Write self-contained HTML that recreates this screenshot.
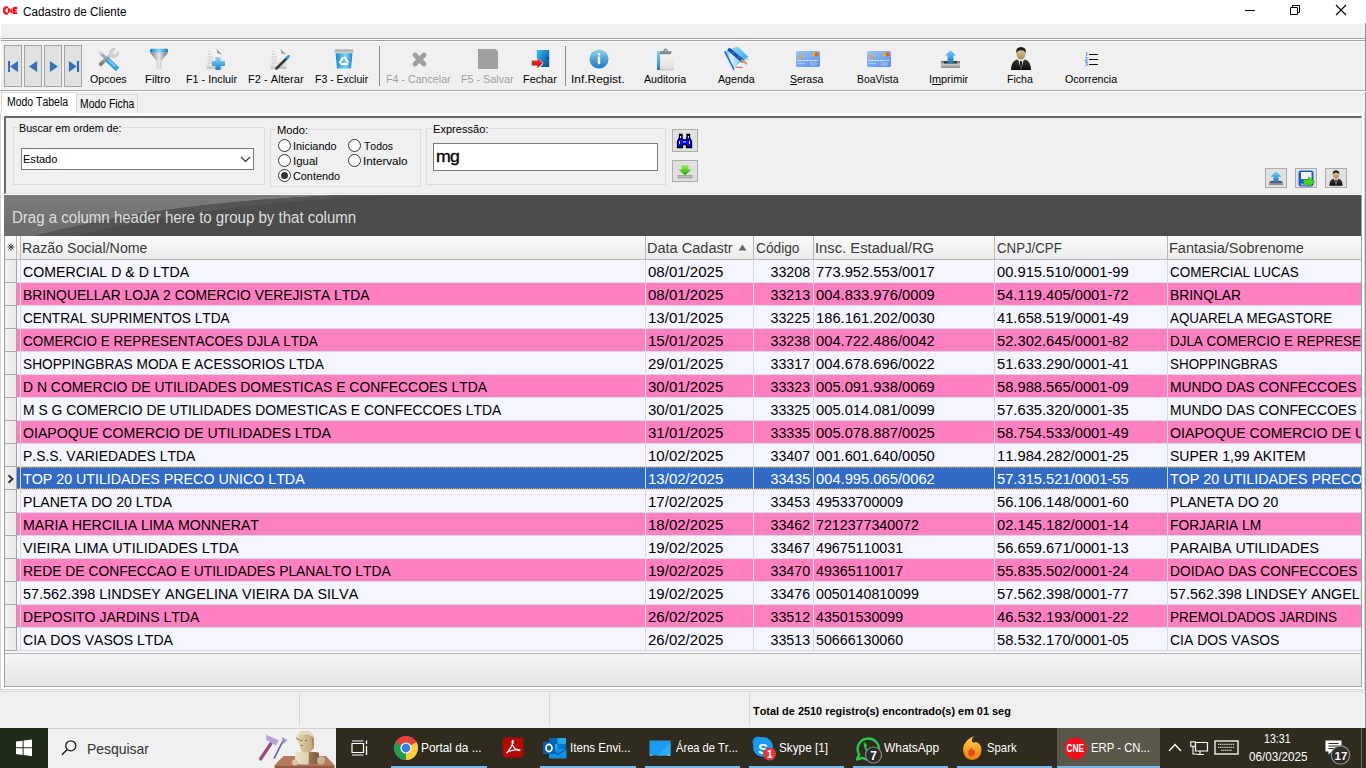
<!DOCTYPE html>
<html><head><meta charset="utf-8"><title>Cadastro de Cliente</title>
<style>
*{box-sizing:border-box;margin:0;padding:0}
html,body{width:1366px;height:768px;overflow:hidden;background:#f0f0f0;font-family:"Liberation Sans",sans-serif;position:relative}
.a{position:absolute}
#title{left:0;top:0;width:1366px;height:24px;background:#fff}
#title .t{left:23px;top:4px;font-size:11.6px;color:#000;white-space:nowrap}
#menu{left:1px;top:24px;width:1363px;height:14px;background:#f0f0f0}
.hl{position:absolute;height:1px;background:#a0a0a0}
.wl{position:absolute;height:1px;background:#fff}
#winr{left:1365px;top:23px;width:1px;height:705px;background:#8f8f8f}
.nav{position:absolute;top:45px;width:18px;height:42px;background:#e1e1e1;border:1px solid #a6a6a6}
.nav svg{position:absolute;left:1px;top:14px}
.tb{position:absolute;top:42px;height:48px}
.tb .lbl{position:absolute;top:73px;font-size:10.5px;color:#000;white-space:nowrap}
.lbl{position:absolute;font-size:10.5px;color:#000;white-space:nowrap;line-height:12px}
.lbl.dis{color:#a0a0a0}
.sep{position:absolute;top:46px;width:1px;height:40px;background:#8a8a8a}
.ico{position:absolute}
.tab{position:absolute;font-size:11.6px;white-space:nowrap}
.gb{position:absolute;border:1px solid #dcdcdc}
.gbl{position:absolute;font-size:10.6px;background:#f0f0f0;padding:0 1px;white-space:nowrap;line-height:12px}
.radio{position:absolute;width:13px;height:13px;border-radius:50%;border:1px solid #333;background:#fff}
.radio.on:after{content:"";position:absolute;left:2px;top:2px;width:7px;height:7px;border-radius:50%;background:#333}
.rl{background:#f5f5ff}
.rp{background:#ff80c0}
.rs{background:#316ac5;color:#fff}
.row{position:absolute;left:5px;width:1356px;height:23px;border-bottom:1px solid #d5d9e4}
.row .c{position:absolute;top:0;height:22px;line-height:24px;font-size:15.5px;white-space:nowrap;overflow:hidden;padding-left:2px;color:#000;border-left:1px solid #d5d9e4}
.row .c.r{text-align:right;padding-right:3px;padding-left:0}
.rs .c{color:#fff}
.row .c{left:0}
.ind{position:absolute;left:0;top:0;width:12px;height:23px;background:linear-gradient(90deg,#f2f2f2,#e8e8e8);border-right:1px solid #a4a4a4;border-bottom:1px solid #a8a8a8}
.ind2{position:absolute;left:12px;top:0;width:3px;height:22px}
.hdr{position:absolute;top:236px;height:24px;background:linear-gradient(#fafafa,#ececec);border-bottom:1px solid #b8b8b8;font-size:15px;color:#3a3a3a;line-height:23px;white-space:nowrap;overflow:hidden;padding-left:3px}
.sb{position:absolute;top:693px;height:33px;width:1px;background:#d7d7d7}
.tk{position:absolute;color:#fff;font-size:12.2px;white-space:nowrap;line-height:14px}
.ul{position:absolute;top:766px;height:2px;background:#76b9ed}
.sx{display:inline-block;white-space:pre}
body{font-kerning:none}
.lb{position:absolute;white-space:pre;transform-origin:0 0}
.dot{position:absolute;left:12px;width:1344px;height:1px;background:repeating-linear-gradient(90deg,#f0a030 0 1px,transparent 1px 2px)}

</style></head><body>
<!-- TITLE BAR -->
<div id="title" class="a">
  <svg class="a" style="left:2px;top:5px" width="17" height="11" viewBox="0 0 17 11">
 <path d="M5 2.4Q2.2 2.2 2.1 5.5Q2.2 8.8 5 8.6" fill="none" stroke="#ff0a14" stroke-width="2.4" stroke-linecap="round"/>
 <path d="M6 8.2V3.2H7.6L9.2 5.6V3.2H10.6V8.2H9.2L7.5 5.7V8.2z" fill="#ff0a14"/>
 <path d="M11 2H15.2V3.9H13V4.7H14.8V6.4H13V7.2H15.3V9H11z" fill="#ff0a14"/>
</svg>
  <svg class="a" style="left:1240px;top:0" width="126" height="24" viewBox="0 0 126 24">
    <path d="M5 10.5H15" stroke="#000" stroke-width="1"/>
    <path d="M50.5 7.5h7v7h-7z M52.5 7.5V5.5h7v7h-2" fill="none" stroke="#000" stroke-width="1"/>
    <path d="M96 5L106 15M106 5L96 15" stroke="#000" stroke-width="1.1"/>
  </svg>
</div>
<div id="menu" class="a"></div>
<div class="hl" style="left:0;top:38px;width:1366px"></div>
<div class="wl" style="left:0;top:39px;width:1366px"></div>
<div class="hl" style="left:1px;top:40px;width:1364px"></div>
<div class="wl" style="left:1px;top:41px;width:1364px"></div>
<div id="winr" class="a"></div>
<div class="a" style="left:0;top:24px;width:1px;height:666px;background:#fff"></div>

<!-- TOOLBAR -->
<div class="nav" style="left:4px"><svg width="17" height="14" viewBox="0 0 17 14"><path d="M2 1h2v11H2z M12 1v11L4 6.5z" fill="#3671b8"/></svg></div>
<div class="nav" style="left:24px"><svg width="17" height="14" viewBox="0 0 17 14"><path d="M11.1 1v11L3.1 6.5z" fill="#3671b8"/></svg></div>
<div class="nav" style="left:44px"><svg width="17" height="14" viewBox="0 0 17 14"><path d="M3.9 1v11l8-5.5z" fill="#3671b8"/></svg></div>
<div class="nav" style="left:64px"><svg width="17" height="14" viewBox="0 0 17 14"><path d="M2.9 1v11l7.8-5.5z M10.9 1h2.2v11h-2.2z" fill="#3671b8"/></svg></div>

<svg class="ico" style="left:96px;top:46px" width="26" height="26" viewBox="0 0 26 26">
 <defs>
  <linearGradient id="wr" x1="0" y1="1" x2="1" y2="0"><stop offset="0" stop-color="#7a7a7a"/><stop offset=".6" stop-color="#b8b8b8"/><stop offset="1" stop-color="#dedede"/></linearGradient>
  <linearGradient id="bh" x1="0" y1="0" x2="1" y2="0"><stop offset="0" stop-color="#2a8fd0"/><stop offset=".5" stop-color="#7fd3f7"/><stop offset="1" stop-color="#1e7fc2"/></linearGradient>
 </defs>
 <path d="M4.8 18.2L16 7.5" stroke="url(#wr)" stroke-width="3.8" stroke-linecap="round"/>
 <circle cx="18" cy="7" r="5" fill="#cfcfcf"/>
 <path d="M17.5 7.5L23 2" stroke="#f0f0f0" stroke-width="3.2"/>
 <path d="M4.5 7.2L11.5 13.8" stroke="#a6a6a6" stroke-width="3"/>
 <circle cx="4.4" cy="6.8" r="2.1" fill="#d9d9d9"/>
 <path d="M12.2 14.6L19.8 21.6" stroke="#39a3dd" stroke-width="5" stroke-linecap="square"/>
 <path d="M12 13.6L19.6 20.6" stroke="#8edbf9" stroke-width="1.4"/>
</svg>
<svg class="ico" style="left:148px;top:47px" width="22" height="24" viewBox="0 0 22 24">
 <defs>
  <linearGradient id="fg" x1="0" y1="0" x2="1" y2="0"><stop offset="0" stop-color="#707070"/><stop offset=".5" stop-color="#e8e8e8"/><stop offset="1" stop-color="#6a6a6a"/></linearGradient>
  <linearGradient id="fr" x1="0" y1="0" x2="1" y2="0"><stop offset="0" stop-color="#1d78c8"/><stop offset=".5" stop-color="#8fd8f8"/><stop offset="1" stop-color="#1d78c8"/></linearGradient>
 </defs>
 <path d="M2 5.5H20L13.3 14V22H8.7V14z" fill="url(#fg)"/>
 <rect x="2" y="1.8" width="18" height="3.6" rx="1.2" fill="url(#fr)"/>
</svg>
<svg class="ico" style="left:204px;top:47px" width="24" height="24" viewBox="0 0 24 24">
 <defs><linearGradient id="dg" x1="0" y1="0" x2="0" y2="1"><stop offset="0" stop-color="#fafafa"/><stop offset=".8" stop-color="#e6e6e6"/><stop offset="1" stop-color="#b8b8b8"/></linearGradient>
 <linearGradient id="pg" x1="0" y1="0" x2="0" y2="1"><stop offset="0" stop-color="#8fdcf8"/><stop offset="1" stop-color="#1c7cc6"/></linearGradient></defs>
 <path d="M2.5 1.5H13L18.5 7V22H2.5z" fill="url(#dg)" stroke="#e2e2e2" stroke-width=".6"/>
 <path d="M12.5 2L18 7.5L13.5 6.5z" fill="#9a9a9a"/>
 <path d="M4 4h3M4 7h3.5M4 10h5M4 13h4M4 16h4" stroke="#c8c8c8" stroke-width="1"/>
 <path d="M11.5 10H16.5V14H21V19H16.5V23H11.5V19H8V14H11.5z" fill="url(#pg)"/>
</svg>
<svg class="ico" style="left:268px;top:47px" width="24" height="24" viewBox="0 0 24 24">
 <path d="M2.5 1.5H13L18.5 7V22H2.5z" fill="url(#dg)" stroke="#e2e2e2" stroke-width=".6"/>
 <path d="M12.5 2L18 7.5L13.5 6.5z" fill="#9a9a9a"/>
 <path d="M4 4h3M4 7h3.5M4 10h5M4 13h4M4 16h4" stroke="#c8c8c8" stroke-width="1"/>
 <path d="M8.5 21.5L20 10" stroke="#3b3b3b" stroke-width="2.6" stroke-linecap="round"/>
 <path d="M19 11l1.8-1.8" stroke="#3aa0de" stroke-width="2.6" stroke-linecap="round"/>
</svg>
<svg class="ico" style="left:332px;top:47px" width="24" height="24" viewBox="0 0 24 24">
 <defs><linearGradient id="bn" x1="0" y1="0" x2="1" y2="0"><stop offset="0" stop-color="#1a86cc"/><stop offset=".6" stop-color="#7fd4f7"/><stop offset="1" stop-color="#1a7ec4"/></linearGradient>
 <linearGradient id="ld" x1="0" y1="0" x2="0" y2="1"><stop offset="0" stop-color="#9c9c9c"/><stop offset="1" stop-color="#dadada"/></linearGradient></defs>
 <path d="M3.5 5.8H20.5L19 21.5H5z" fill="url(#bn)"/>
 <path d="M2.5 3.6Q3 2.6 4.5 2.6H19.5Q21 2.6 21.5 3.6V6.2H2.5z" fill="url(#ld)"/>
 <path d="M12 8.6L16.9 17H7.1z" fill="none" stroke="#fff" stroke-width="2" stroke-linejoin="round" stroke-dasharray="7 2.6" stroke-dashoffset="-1.2"/>
</svg>
<svg class="ico" style="left:411px;top:51px" width="17" height="17" viewBox="0 0 17 17">
 <path d="M4 4L13 13M13 4L4 13" stroke="#a0a0a0" stroke-width="4.8" stroke-linecap="round"/>
</svg>
<svg class="ico" style="left:478px;top:49px" width="20" height="20" viewBox="0 0 20 20">
 <path d="M0 0H17.5L20 2.5V20H0z" fill="#a0a0a0"/>
</svg>
<svg class="ico" style="left:530px;top:48px" width="22" height="22" viewBox="0 0 22 22">
 <defs><linearGradient id="dr" x1="0" y1="0" x2="1" y2="1"><stop offset="0" stop-color="#3ec0f4"/><stop offset=".5" stop-color="#1a7fc4"/><stop offset="1" stop-color="#0d4f8a"/></linearGradient>
 <linearGradient id="ra" x1="0" y1="0" x2="0" y2="1"><stop offset="0" stop-color="#f24040"/><stop offset="1" stop-color="#b80c0c"/></linearGradient></defs>
 <path d="M6.8 2H19.2V19H10.5L13.5 15L8.5 10.5H6.8z" fill="url(#dr)"/>
 <circle cx="17.6" cy="10" r=".7" fill="#111"/>
 <path d="M1.8 12.6H7.6V9.8L12.8 15L7.6 20.2V17.4H1.8z" fill="url(#ra)"/>
</svg>
<svg class="ico" style="left:588px;top:48px" width="22" height="22" viewBox="0 0 22 22">
 <defs><linearGradient id="ig" x1="0" y1="0" x2="0" y2="1"><stop offset="0" stop-color="#8fd2f2"/><stop offset="1" stop-color="#1a78c2"/></linearGradient></defs>
 <circle cx="11" cy="11" r="9.6" fill="url(#ig)"/>
 <rect x="9.8" y="8.6" width="2.4" height="7.6" fill="#fff"/>
 <rect x="9.8" y="5.2" width="2.4" height="2.2" fill="#fff"/>
</svg>
<svg class="ico" style="left:655px;top:47px" width="22" height="24" viewBox="0 0 22 24">
 <defs><linearGradient id="cb" x1="0" y1="0" x2="0" y2="1"><stop offset="0" stop-color="#8fd4f6"/><stop offset="1" stop-color="#1a7cc8"/></linearGradient>
 <linearGradient id="cp" x1="0" y1="0" x2="0" y2="1"><stop offset="0" stop-color="#f6f6f6"/><stop offset=".85" stop-color="#e2e2e2"/><stop offset="1" stop-color="#c4c4c4"/></linearGradient></defs>
 <rect x="2" y="4" width="15" height="19" fill="url(#cb)"/>
 <rect x="5" y="6" width="14" height="17.5" fill="url(#cp)"/>
 <path d="M5 7.2V4.6H8.3Q8.3 1.6 10.5 1.6Q12.7 1.6 12.7 4.6H16V7.2z" fill="#858585"/><circle cx="10.5" cy="3.6" r=".9" fill="#d8d8d8"/>
</svg>
<svg class="ico" style="left:716px;top:44px" width="40" height="28" viewBox="0 0 40 28">
 <defs><linearGradient id="bk" x1="0" y1="0" x2="1" y2="0"><stop offset="0" stop-color="#4aa0e8"/><stop offset=".35" stop-color="#d8f0ff"/><stop offset="1" stop-color="#7cc8f4"/></linearGradient>
 <linearGradient id="bk2" x1="0" y1="0" x2="1" y2="1"><stop offset="0" stop-color="#8ad4f8"/><stop offset="1" stop-color="#3aaae8"/></linearGradient></defs>
 <path d="M8.8 7.6L12.8 5.2L25.5 18L18 25.6z" fill="url(#bk)"/>
 <path d="M8.8 7.6L18 25.6" stroke="#1e6ed0" stroke-width="1.6"/>
 <path d="M18.5 24.5L25.5 18.5" stroke="#fff" stroke-width="1.2"/>
 <path d="M19.5 3.2L22 2.8L32.2 12.6L31.2 15.4L26 17.5L14.5 5.5z" fill="url(#bk2)"/>
 <path d="M27.5 17L31.5 13.5" stroke="#e8f6ff" stroke-width="1"/>
 <path d="M13.5 5.8L26.5 16.8" stroke="#1a4eb0" stroke-width="3.6" stroke-linecap="round"/>
 <path d="M16.5 8.2L18 9.5M22 12.6L23.5 13.9" stroke="#d09050" stroke-width="1"/>
 <path d="M26 16.5L30.5 19.5" stroke="#e0a060" stroke-width="2.2" stroke-linecap="round"/>
 <path d="M19.5 23.2L26.5 23.6" stroke="#e07040" stroke-width="1.3"/>
</svg>
<svg class="ico" style="left:796px;top:51px" width="24" height="16" viewBox="0 0 24 16">
 <defs><linearGradient id="cd" x1="0" y1="0" x2="1" y2="1"><stop offset="0" stop-color="#9cc4f6"/><stop offset="1" stop-color="#5a8ee4"/></linearGradient></defs>
 <rect x="0" y="0" width="24" height="16" rx="1.6" fill="url(#cd)"/>
 <rect x="2.5" y="4" width="4" height="3" fill="#e8a050"/>
 <circle cx="18" cy="3.6" r="2" fill="#f0b020"/><circle cx="20.5" cy="3.6" r="2" fill="#e06020"/>
 <path d="M1.5 9.5H22" stroke="#eef4ff" stroke-width="1.2" stroke-dasharray="2 .8"/>
 <path d="M2 12.5H9M14 12H21M14 14H21" stroke="#b5d0f6" stroke-width=".8"/>
</svg>
<svg class="ico" style="left:867px;top:51px" width="24" height="16" viewBox="0 0 24 16">
 <rect x="0" y="0" width="24" height="16" rx="1.6" fill="url(#cd)"/>
 <rect x="2.5" y="4" width="4" height="3" fill="#e8a050"/>
 <circle cx="18" cy="3.6" r="2" fill="#f0b020"/><circle cx="20.5" cy="3.6" r="2" fill="#e06020"/>
 <path d="M1.5 9.5H22" stroke="#eef4ff" stroke-width="1.2" stroke-dasharray="2 .8"/>
 <path d="M2 12.5H9M14 12H21M14 14H21" stroke="#b5d0f6" stroke-width=".8"/>
</svg>
<svg class="ico" style="left:940px;top:49px" width="21" height="20" viewBox="0 0 21 20">
 <defs><linearGradient id="ua" x1="0" y1="0" x2="0" y2="1"><stop offset="0" stop-color="#7fd0f4"/><stop offset="1" stop-color="#1a7cc4"/></linearGradient>
 <linearGradient id="tr" x1="0" y1="0" x2="0" y2="1"><stop offset="0" stop-color="#6a6a6a"/><stop offset=".5" stop-color="#c8c8c8"/><stop offset="1" stop-color="#8a8a8a"/></linearGradient></defs>
 <path d="M1 12H20V19H1z" fill="url(#tr)"/>
 <rect x="4" y="12" width="13" height="2.5" fill="#3a3a3a"/>
 <path d="M10.5 1L16 6.5H13.5V14H7.5V6.5H5z" fill="url(#ua)"/>
</svg>
<svg class="ico" style="left:1009px;top:46px" width="24" height="25" viewBox="0 0 24 25">
 <defs><linearGradient id="sk" x1="0" y1="0" x2="0" y2="1"><stop offset="0" stop-color="#e2c8a0"/><stop offset="1" stop-color="#b08c60"/></linearGradient>
 <linearGradient id="st" x1="0" y1="0" x2="0" y2="1"><stop offset="0" stop-color="#3a3a3a"/><stop offset="1" stop-color="#0a0a0a"/></linearGradient></defs>
 <path d="M2 24Q2 15.5 7.5 13.5L12 15L16.5 13.5Q22 15.5 22 24z" fill="url(#st)"/>
 <path d="M9.3 13.6L12 24L14.7 13.6L12 14.6z" fill="#f6f6f6"/>
 <path d="M11.2 15L10.9 16L11.5 24H12.5L13.1 16L12.8 15z" fill="#1a1a1a"/>
 <ellipse cx="12" cy="8" rx="4.6" ry="5.6" fill="url(#sk)"/>
 <path d="M7 7.5Q6.5 1.5 12 1Q17.5 1.5 17 7.5Q16.5 4.5 12 4.2Q7.5 4.5 7 7.5z" fill="#1a1a1a"/>
</svg>
<svg class="ico" style="left:1084px;top:51px" width="16" height="16" viewBox="0 0 16 16">
 <path d="M1.8 2L2.8 1.2V5M1.3 6.8Q3.6 6 3.4 7.5L1.3 9.8H3.6M1.3 11.2H3.5L2.3 12.6Q3.8 12.8 3.5 14Q2.6 15 1.3 14.2" fill="none" stroke="#4a86e4" stroke-width="1"/>
 <path d="M5 3.5H14M5 8.5H14M5 13.5H14" stroke="#111" stroke-width="1.1"/>
</svg>


<div class="sep" style="left:379px"></div>
<div class="sep" style="left:565px"></div>
<div class="hl" style="left:0;top:90px;width:1366px;background:#a8a8a8"></div>
<div class="wl" style="left:0;top:91px;width:1366px"></div>

<!-- TABS -->
<div class="a" style="left:76px;top:94px;width:62px;height:19px;background:#f0f0f0;border:1px solid #d9d9d9;border-bottom:none"></div>
<div class="a" style="left:1px;top:92px;width:76px;height:22px;background:#fff;border:1px solid #d9d9d9;border-bottom:none"></div>
<!-- tab page -->
<div class="a" style="left:0;top:113px;width:1365px;height:577px;background:#fff;border:1px solid #d6d6d6;border-top:none"></div>
<div class="a" style="left:4px;top:116px;width:1358px;height:78px;background:#f0f0f0;border-top:2px solid #696969;border-left:2px solid #696969;border-right:1px solid #e3e3e3;border-bottom:1px solid #e3e3e3"></div>
<div class="a" style="left:4px;top:195px;width:1358px;height:492px;background:#f0f0f0"></div>

<!-- SEARCH PANEL -->
<div class="gb" style="left:13px;top:127px;width:252px;height:58px"></div>
<div class="a" style="left:21px;top:148px;width:233px;height:22px;background:#fff;border:1px solid #7a7a7a"></div>
<svg class="a" style="left:240px;top:156px" width="11" height="7" viewBox="0 0 11 7"><path d="M1 1l4.5 4.5L10 1" fill="none" stroke="#333" stroke-width="1.1"/></svg>

<div class="gb" style="left:270px;top:129px;width:151px;height:58px"></div>
<div class="radio" style="left:278px;top:139px"></div>
<div class="radio" style="left:348px;top:139px"></div>
<div class="radio" style="left:278px;top:154px"></div>
<div class="radio" style="left:348px;top:154px"></div>
<div class="radio on" style="left:278px;top:169px"></div>

<div class="gb" style="left:426px;top:128px;width:240px;height:57px"></div>
<div class="a" style="left:433px;top:143px;width:225px;height:28px;background:#fff;border:1px solid #7a7a7a"></div>

<div class="a" style="left:672px;top:129px;width:26px;height:23px;background:#e1e1e1;border:1px solid #adadad"></div>
<div class="a" style="left:672px;top:160px;width:26px;height:22px;background:#e1e1e1;border:1px solid #adadad"></div>
<div class="a" style="left:1265px;top:168px;width:22px;height:20px;background:#e1e1e1;border:1px solid #adadad"></div>
<div class="a" style="left:1295px;top:168px;width:22px;height:20px;background:#e1e1e1;border:1px solid #adadad"></div>
<div class="a" style="left:1325px;top:168px;width:22px;height:20px;background:#e1e1e1;border:1px solid #adadad"></div>
<svg class="ico" style="left:676px;top:133px" width="17" height="16" viewBox="0 0 17 16">
 <path d="M3.5 1.5H6V4.5L7 7H10L11 4.5V1.5H13.5V4.5L15.5 8.5V14.5H10.5V11.5H6.5V14.5H1.5V8.5L3.5 4.5z" fill="#0a0aff" stroke="#000" stroke-width="1.3" stroke-linejoin="miter"/>
 <path d="M4.6 3v2M3.5 8v3M7.8 8v1.5M9.2 8v1.5M13.5 8v3M12.4 3v2" stroke="#fff" stroke-width=".9"/>
</svg>
<svg class="ico" style="left:677px;top:164px" width="16" height="15" viewBox="0 0 16 15">
 <defs><linearGradient id="ga" x1="0" y1="0" x2="0" y2="1"><stop offset="0" stop-color="#a6f060"/><stop offset="1" stop-color="#1ca800"/></linearGradient></defs>
 <path d="M4.5 1H11.5V5.5H14.5L8 11.5L1.5 5.5H4.5z" fill="url(#ga)"/>
 <rect x="1" y="11.5" width="14" height="2.5" fill="#bdbdbd" stroke="#8a8a8a" stroke-width=".6"/>
</svg>
<svg class="ico" style="left:1267px;top:170px" width="18" height="16" viewBox="0 0 18 16">
 <path d="M2.5 11H15.5L16 15H2z" fill="#8a8a8a"/>
 <path d="M4 11H14V12.5H4z" fill="#3a3a3a"/>
 <path d="M9 1.2L14.5 6.8H11.6V12H6.4V6.8H3.5z" fill="url(#ua)"/>
</svg>
<svg class="ico" style="left:1298px;top:170px" width="18" height="17" viewBox="0 0 18 17">
 <rect x="1" y="1" width="14" height="15" rx="1.5" fill="#1f5fd6" stroke="#1848a8" stroke-width=".8"/>
 <rect x="3" y="2" width="10.5" height="7" fill="#f2f2f2"/>
 <rect x="3" y="13.5" width="10.5" height="2" fill="#9ab8f0"/>
 <path d="M5.5 9.5H10.5V6.8L16.8 11.8L10.5 16.8V14.2H5.5z" fill="#46d820" stroke="#1a9a00" stroke-width=".6"/>
</svg>
<svg class="ico" style="left:1328px;top:169px" width="16" height="18" viewBox="0 0 24 25">
 <path d="M2 24Q2 15.5 7.5 13.5L12 15L16.5 13.5Q22 15.5 22 24z" fill="url(#st)"/>
 <path d="M9.3 13.6L12 24L14.7 13.6L12 14.6z" fill="#f6f6f6"/>
 <path d="M11.2 15L10.9 16L11.5 24H12.5L13.1 16L12.8 15z" fill="#1a1a1a"/>
 <ellipse cx="12" cy="8" rx="4.6" ry="5.6" fill="url(#sk)"/>
 <path d="M7 7.5Q6.5 1.5 12 1Q17.5 1.5 17 7.5Q16.5 4.5 12 4.2Q7.5 4.5 7 7.5z" fill="#1a1a1a"/>
</svg>



<!-- GROUP PANEL -->
<svg class="a" style="left:4px;top:195px" width="1358" height="41" viewBox="-1 0 1358 41">
  <defs><linearGradient id="gl" x1="0" y1="0" x2="0" y2="1"><stop offset="0" stop-color="#7c7c7c"/><stop offset="1" stop-color="#6c6c6c"/></linearGradient></defs>
  <rect x="-1" width="1358" height="41" fill="#4c4c4c"/>
  <path d="M-1 0H340C260 3 185 10 115 22C75 30 48 36 30 41H-1z" fill="url(#gl)"/>
  <path d="M30 41C48 36 75 30 115 22C185 10 260 3 340 0H390C300 4 240 11 190 18C140 25 100 33 70 41z" fill="#555555"/>
</svg>

<!-- GRID HEADER -->
<div class="a" style="left:5px;top:236px;width:1356px;height:24px;background:linear-gradient(#fafafa,#ececec);border-bottom:1px solid #b8b8b8"></div>
<div class="a" style="left:5px;top:236px;width:12px;height:23px;border-right:1px solid #b8b8b8"><svg style="position:absolute;left:2px;top:7px" width="8" height="8" viewBox="0 0 8 8"><path d="M4 0.5V7.5M0.5 4H7.5M1.5 1.5L6.5 6.5M6.5 1.5L1.5 6.5" stroke="#333" stroke-width="0.9"/></svg></div>
<div class="a" style="left:17px;top:236px;width:4px;height:23px;border-right:1px solid #b8b8b8"></div>
<div class="hdr" style="left:21px;width:625px;border-right:1px solid #b8b8b8;background:none;border-bottom:none"></div>
<div class="hdr" style="left:646px;width:108px;border-right:1px solid #b8b8b8;background:none;border-bottom:none"></div>
<div class="hdr" style="left:754px;width:60px;border-right:1px solid #b8b8b8;background:none;border-bottom:none"></div>
<div class="hdr" style="left:814px;width:181px;border-right:1px solid #b8b8b8;background:none;border-bottom:none"></div>
<div class="hdr" style="left:995px;width:173px;border-right:1px solid #b8b8b8;background:none;border-bottom:none"></div>
<div class="hdr" style="left:1168px;width:193px;background:none;border-bottom:none"></div>

<!-- GRID ROWS -->
<svg class="ico" style="left:738px;top:244px" width="9" height="7" viewBox="0 0 9 7"><path d="M4.5 0.5L8.5 6.5H0.5z" fill="#6a6a6a"/></svg>
<div class="row rl" style="top:260px">
<div class="ind"></div><div class="ind2"></div>
<div class="c" style="left:15px;width:625px"><span class="sx" style="transform:scaleX(0.9142);transform-origin:left">COMERCIAL D &amp; D LTDA</span></div>
<div class="c" style="left:640px;width:108px"><span class="sx" style="transform:scaleX(0.9699);transform-origin:left">08/01/2025</span></div>
<div class="c r" style="left:748px;width:60px"><span class="sx" style="transform:scaleX(0.9188);transform-origin:right">33208</span></div>
<div class="c" style="left:808px;width:181px"><span class="sx" style="transform:scaleX(0.9505);transform-origin:left">773.952.553/0017</span></div>
<div class="c" style="left:989px;width:173px"><span class="sx" style="transform:scaleX(0.9489);transform-origin:left">00.915.510/0001-99</span></div>
<div class="c" style="left:1162px;width:194px"><span class="sx" style="transform:scaleX(0.8684);transform-origin:left">COMERCIAL LUCAS</span></div>
</div>
<div class="row rp" style="top:283px">
<div class="ind"></div><div class="ind2"></div>
<div class="c" style="left:15px;width:625px"><span class="sx" style="transform:scaleX(0.8938);transform-origin:left">BRINQUELLAR LOJA 2 COMERCIO VEREJISTA LTDA</span></div>
<div class="c" style="left:640px;width:108px"><span class="sx" style="transform:scaleX(0.9699);transform-origin:left">08/01/2025</span></div>
<div class="c r" style="left:748px;width:60px"><span class="sx" style="transform:scaleX(0.9188);transform-origin:right">33213</span></div>
<div class="c" style="left:808px;width:181px"><span class="sx" style="transform:scaleX(0.9505);transform-origin:left">004.833.976/0009</span></div>
<div class="c" style="left:989px;width:173px"><span class="sx" style="transform:scaleX(0.9489);transform-origin:left">54.119.405/0001-72</span></div>
<div class="c" style="left:1162px;width:194px"><span class="sx" style="transform:scaleX(0.8949);transform-origin:left">BRINQLAR</span></div>
</div>
<div class="row rl" style="top:306px">
<div class="ind"></div><div class="ind2"></div>
<div class="c" style="left:15px;width:625px"><span class="sx" style="transform:scaleX(0.8822);transform-origin:left">CENTRAL SUPRIMENTOS LTDA</span></div>
<div class="c" style="left:640px;width:108px"><span class="sx" style="transform:scaleX(0.9699);transform-origin:left">13/01/2025</span></div>
<div class="c r" style="left:748px;width:60px"><span class="sx" style="transform:scaleX(0.9188);transform-origin:right">33225</span></div>
<div class="c" style="left:808px;width:181px"><span class="sx" style="transform:scaleX(0.9505);transform-origin:left">186.161.202/0030</span></div>
<div class="c" style="left:989px;width:173px"><span class="sx" style="transform:scaleX(0.9489);transform-origin:left">41.658.519/0001-49</span></div>
<div class="c" style="left:1162px;width:194px"><span class="sx" style="transform:scaleX(0.8632);transform-origin:left">AQUARELA MEGASTORE</span></div>
</div>
<div class="row rp" style="top:329px">
<div class="ind"></div><div class="ind2"></div>
<div class="c" style="left:15px;width:625px"><span class="sx" style="transform:scaleX(0.8687);transform-origin:left">COMERCIO E REPRESENTACOES DJLA LTDA</span></div>
<div class="c" style="left:640px;width:108px"><span class="sx" style="transform:scaleX(0.9699);transform-origin:left">15/01/2025</span></div>
<div class="c r" style="left:748px;width:60px"><span class="sx" style="transform:scaleX(0.9188);transform-origin:right">33238</span></div>
<div class="c" style="left:808px;width:181px"><span class="sx" style="transform:scaleX(0.9505);transform-origin:left">004.722.486/0042</span></div>
<div class="c" style="left:989px;width:173px"><span class="sx" style="transform:scaleX(0.9489);transform-origin:left">52.302.645/0001-82</span></div>
<div class="c" style="left:1162px;width:194px"><span class="sx" style="transform:scaleX(0.8660);transform-origin:left">DJLA COMERCIO E REPRESENTA</span></div>
</div>
<div class="row rl" style="top:352px">
<div class="ind"></div><div class="ind2"></div>
<div class="c" style="left:15px;width:625px"><span class="sx" style="transform:scaleX(0.8843);transform-origin:left">SHOPPINGBRAS MODA E ACESSORIOS LTDA</span></div>
<div class="c" style="left:640px;width:108px"><span class="sx" style="transform:scaleX(0.9699);transform-origin:left">29/01/2025</span></div>
<div class="c r" style="left:748px;width:60px"><span class="sx" style="transform:scaleX(0.9188);transform-origin:right">33317</span></div>
<div class="c" style="left:808px;width:181px"><span class="sx" style="transform:scaleX(0.9505);transform-origin:left">004.678.696/0022</span></div>
<div class="c" style="left:989px;width:173px"><span class="sx" style="transform:scaleX(0.9489);transform-origin:left">51.633.290/0001-41</span></div>
<div class="c" style="left:1162px;width:194px"><span class="sx" style="transform:scaleX(0.8657);transform-origin:left">SHOPPINGBRAS</span></div>
</div>
<div class="row rp" style="top:375px">
<div class="ind"></div><div class="ind2"></div>
<div class="c" style="left:15px;width:625px"><span class="sx" style="transform:scaleX(0.8979);transform-origin:left">D N COMERCIO DE UTILIDADES DOMESTICAS E CONFECCOES LTDA</span></div>
<div class="c" style="left:640px;width:108px"><span class="sx" style="transform:scaleX(0.9699);transform-origin:left">30/01/2025</span></div>
<div class="c r" style="left:748px;width:60px"><span class="sx" style="transform:scaleX(0.9188);transform-origin:right">33323</span></div>
<div class="c" style="left:808px;width:181px"><span class="sx" style="transform:scaleX(0.9505);transform-origin:left">005.091.938/0069</span></div>
<div class="c" style="left:989px;width:173px"><span class="sx" style="transform:scaleX(0.9489);transform-origin:left">58.988.565/0001-09</span></div>
<div class="c" style="left:1162px;width:194px"><span class="sx" style="transform:scaleX(0.8945);transform-origin:left">MUNDO DAS CONFECCOES &amp; UT</span></div>
</div>
<div class="row rl" style="top:398px">
<div class="ind"></div><div class="ind2"></div>
<div class="c" style="left:15px;width:625px"><span class="sx" style="transform:scaleX(0.8955);transform-origin:left">M S G COMERCIO DE UTILIDADES DOMESTICAS E CONFECCOES LTDA</span></div>
<div class="c" style="left:640px;width:108px"><span class="sx" style="transform:scaleX(0.9699);transform-origin:left">30/01/2025</span></div>
<div class="c r" style="left:748px;width:60px"><span class="sx" style="transform:scaleX(0.9188);transform-origin:right">33325</span></div>
<div class="c" style="left:808px;width:181px"><span class="sx" style="transform:scaleX(0.9505);transform-origin:left">005.014.081/0099</span></div>
<div class="c" style="left:989px;width:173px"><span class="sx" style="transform:scaleX(0.9489);transform-origin:left">57.635.320/0001-35</span></div>
<div class="c" style="left:1162px;width:194px"><span class="sx" style="transform:scaleX(0.8945);transform-origin:left">MUNDO DAS CONFECCOES &amp; UT</span></div>
</div>
<div class="row rp" style="top:421px">
<div class="ind"></div><div class="ind2"></div>
<div class="c" style="left:15px;width:625px"><span class="sx" style="transform:scaleX(0.9122);transform-origin:left">OIAPOQUE COMERCIO DE UTILIDADES LTDA</span></div>
<div class="c" style="left:640px;width:108px"><span class="sx" style="transform:scaleX(0.9699);transform-origin:left">31/01/2025</span></div>
<div class="c r" style="left:748px;width:60px"><span class="sx" style="transform:scaleX(0.9188);transform-origin:right">33335</span></div>
<div class="c" style="left:808px;width:181px"><span class="sx" style="transform:scaleX(0.9505);transform-origin:left">005.078.887/0025</span></div>
<div class="c" style="left:989px;width:173px"><span class="sx" style="transform:scaleX(0.9489);transform-origin:left">58.754.533/0001-49</span></div>
<div class="c" style="left:1162px;width:194px"><span class="sx" style="transform:scaleX(0.9144);transform-origin:left">OIAPOQUE COMERCIO DE UTIL</span></div>
</div>
<div class="row rl" style="top:444px">
<div class="ind"></div><div class="ind2"></div>
<div class="c" style="left:15px;width:625px"><span class="sx" style="transform:scaleX(0.8965);transform-origin:left">P.S.S. VARIEDADES LTDA</span></div>
<div class="c" style="left:640px;width:108px"><span class="sx" style="transform:scaleX(0.9699);transform-origin:left">10/02/2025</span></div>
<div class="c r" style="left:748px;width:60px"><span class="sx" style="transform:scaleX(0.9188);transform-origin:right">33407</span></div>
<div class="c" style="left:808px;width:181px"><span class="sx" style="transform:scaleX(0.9505);transform-origin:left">001.601.640/0050</span></div>
<div class="c" style="left:989px;width:173px"><span class="sx" style="transform:scaleX(0.9489);transform-origin:left">11.984.282/0001-25</span></div>
<div class="c" style="left:1162px;width:194px"><span class="sx" style="transform:scaleX(0.9056);transform-origin:left">SUPER 1,99 AKITEM</span></div>
</div>
<div class="row rs" style="top:467px">
<div class="ind"></div><div class="ind2"></div>
<div class="dot" style="top:0"></div><div class="dot" style="top:21px"></div>
<div class="c" style="left:15px;width:625px"><span class="sx" style="transform:scaleX(0.9185);transform-origin:left">TOP 20 UTILIDADES PRECO UNICO LTDA</span></div>
<div class="c" style="left:640px;width:108px"><span class="sx" style="transform:scaleX(0.9699);transform-origin:left">13/02/2025</span></div>
<div class="c r" style="left:748px;width:60px"><span class="sx" style="transform:scaleX(0.9188);transform-origin:right">33435</span></div>
<div class="c" style="left:808px;width:181px"><span class="sx" style="transform:scaleX(0.9505);transform-origin:left">004.995.065/0062</span></div>
<div class="c" style="left:989px;width:173px"><span class="sx" style="transform:scaleX(0.9489);transform-origin:left">57.315.521/0001-55</span></div>
<div class="c" style="left:1162px;width:194px"><span class="sx" style="transform:scaleX(0.9223);transform-origin:left">TOP 20 UTILIDADES PRECO UNI</span></div>
<svg style="position:absolute;left:2px;top:7px" width="8" height="10" viewBox="0 0 8 10"><path d="M1.5 1.2L5.5 5L1.5 8.8" fill="none" stroke="#333" stroke-width="2"/></svg>
</div>
<div class="row rl" style="top:490px">
<div class="ind"></div><div class="ind2"></div>
<div class="c" style="left:15px;width:625px"><span class="sx" style="transform:scaleX(0.9098);transform-origin:left">PLANETA DO 20 LTDA</span></div>
<div class="c" style="left:640px;width:108px"><span class="sx" style="transform:scaleX(0.9699);transform-origin:left">17/02/2025</span></div>
<div class="c r" style="left:748px;width:60px"><span class="sx" style="transform:scaleX(0.9188);transform-origin:right">33453</span></div>
<div class="c" style="left:808px;width:181px"><span class="sx" style="transform:scaleX(0.9188);transform-origin:left">49533700009</span></div>
<div class="c" style="left:989px;width:173px"><span class="sx" style="transform:scaleX(0.9489);transform-origin:left">56.106.148/0001-60</span></div>
<div class="c" style="left:1162px;width:194px"><span class="sx" style="transform:scaleX(0.9052);transform-origin:left">PLANETA DO 20</span></div>
</div>
<div class="row rp" style="top:513px">
<div class="ind"></div><div class="ind2"></div>
<div class="c" style="left:15px;width:625px"><span class="sx" style="transform:scaleX(0.9135);transform-origin:left">MARIA HERCILIA LIMA MONNERAT</span></div>
<div class="c" style="left:640px;width:108px"><span class="sx" style="transform:scaleX(0.9699);transform-origin:left">18/02/2025</span></div>
<div class="c r" style="left:748px;width:60px"><span class="sx" style="transform:scaleX(0.9188);transform-origin:right">33462</span></div>
<div class="c" style="left:808px;width:181px"><span class="sx" style="transform:scaleX(0.9188);transform-origin:left">7212377340072</span></div>
<div class="c" style="left:989px;width:173px"><span class="sx" style="transform:scaleX(0.9489);transform-origin:left">02.145.182/0001-14</span></div>
<div class="c" style="left:1162px;width:194px"><span class="sx" style="transform:scaleX(0.8896);transform-origin:left">FORJARIA LM</span></div>
</div>
<div class="row rl" style="top:536px">
<div class="ind"></div><div class="ind2"></div>
<div class="c" style="left:15px;width:625px"><span class="sx" style="transform:scaleX(0.9347);transform-origin:left">VIEIRA LIMA UTILIDADES LTDA</span></div>
<div class="c" style="left:640px;width:108px"><span class="sx" style="transform:scaleX(0.9699);transform-origin:left">19/02/2025</span></div>
<div class="c r" style="left:748px;width:60px"><span class="sx" style="transform:scaleX(0.9188);transform-origin:right">33467</span></div>
<div class="c" style="left:808px;width:181px"><span class="sx" style="transform:scaleX(0.9188);transform-origin:left">49675110031</span></div>
<div class="c" style="left:989px;width:173px"><span class="sx" style="transform:scaleX(0.9489);transform-origin:left">56.659.671/0001-13</span></div>
<div class="c" style="left:1162px;width:194px"><span class="sx" style="transform:scaleX(0.9147);transform-origin:left">PARAIBA UTILIDADES</span></div>
</div>
<div class="row rp" style="top:559px">
<div class="ind"></div><div class="ind2"></div>
<div class="c" style="left:15px;width:625px"><span class="sx" style="transform:scaleX(0.8932);transform-origin:left">REDE DE CONFECCAO E UTILIDADES PLANALTO LTDA</span></div>
<div class="c" style="left:640px;width:108px"><span class="sx" style="transform:scaleX(0.9699);transform-origin:left">19/02/2025</span></div>
<div class="c r" style="left:748px;width:60px"><span class="sx" style="transform:scaleX(0.9188);transform-origin:right">33470</span></div>
<div class="c" style="left:808px;width:181px"><span class="sx" style="transform:scaleX(0.9188);transform-origin:left">49365110017</span></div>
<div class="c" style="left:989px;width:173px"><span class="sx" style="transform:scaleX(0.9489);transform-origin:left">55.835.502/0001-24</span></div>
<div class="c" style="left:1162px;width:194px"><span class="sx" style="transform:scaleX(0.8882);transform-origin:left">DOIDAO DAS CONFECCOES</span></div>
</div>
<div class="row rl" style="top:582px">
<div class="ind"></div><div class="ind2"></div>
<div class="c" style="left:15px;width:625px"><span class="sx" style="transform:scaleX(0.9311);transform-origin:left">57.562.398 LINDSEY ANGELINA VIEIRA DA SILVA</span></div>
<div class="c" style="left:640px;width:108px"><span class="sx" style="transform:scaleX(0.9699);transform-origin:left">19/02/2025</span></div>
<div class="c r" style="left:748px;width:60px"><span class="sx" style="transform:scaleX(0.9188);transform-origin:right">33476</span></div>
<div class="c" style="left:808px;width:181px"><span class="sx" style="transform:scaleX(0.9188);transform-origin:left">0050140810099</span></div>
<div class="c" style="left:989px;width:173px"><span class="sx" style="transform:scaleX(0.9489);transform-origin:left">57.562.398/0001-77</span></div>
<div class="c" style="left:1162px;width:194px"><span class="sx" style="transform:scaleX(0.9257);transform-origin:left">57.562.398 LINDSEY ANGELINA</span></div>
</div>
<div class="row rp" style="top:605px">
<div class="ind"></div><div class="ind2"></div>
<div class="c" style="left:15px;width:625px"><span class="sx" style="transform:scaleX(0.9056);transform-origin:left">DEPOSITO JARDINS LTDA</span></div>
<div class="c" style="left:640px;width:108px"><span class="sx" style="transform:scaleX(0.9699);transform-origin:left">26/02/2025</span></div>
<div class="c r" style="left:748px;width:60px"><span class="sx" style="transform:scaleX(0.9188);transform-origin:right">33512</span></div>
<div class="c" style="left:808px;width:181px"><span class="sx" style="transform:scaleX(0.9188);transform-origin:left">43501530099</span></div>
<div class="c" style="left:989px;width:173px"><span class="sx" style="transform:scaleX(0.9489);transform-origin:left">46.532.193/0001-22</span></div>
<div class="c" style="left:1162px;width:194px"><span class="sx" style="transform:scaleX(0.8742);transform-origin:left">PREMOLDADOS JARDINS</span></div>
</div>
<div class="row rl" style="top:628px">
<div class="ind"></div><div class="ind2"></div>
<div class="c" style="left:15px;width:625px"><span class="sx" style="transform:scaleX(0.9066);transform-origin:left">CIA DOS VASOS LTDA</span></div>
<div class="c" style="left:640px;width:108px"><span class="sx" style="transform:scaleX(0.9699);transform-origin:left">26/02/2025</span></div>
<div class="c r" style="left:748px;width:60px"><span class="sx" style="transform:scaleX(0.9188);transform-origin:right">33513</span></div>
<div class="c" style="left:808px;width:181px"><span class="sx" style="transform:scaleX(0.9188);transform-origin:left">50666130060</span></div>
<div class="c" style="left:989px;width:173px"><span class="sx" style="transform:scaleX(0.9489);transform-origin:left">58.532.170/0001-05</span></div>
<div class="c" style="left:1162px;width:194px"><span class="sx" style="transform:scaleX(0.9008);transform-origin:left">CIA DOS VASOS</span></div>
</div>
<div class="a" style="left:5px;top:651px;width:1356px;height:2px;background:#f5f5ff"></div>
<div class="a" style="left:5px;top:653px;width:1356px;height:34px;background:linear-gradient(#f5f5f5,#e6e6e6);border-top:1px solid #b4b4b4;border-bottom:1px solid #a0a0a0"></div>
<div class="a" style="left:4px;top:236px;width:1px;height:451px;background:#a0a0a0"></div>
<div class="a" style="left:1361px;top:195px;width:1px;height:492px;background:#a0a0a0"></div>

<!-- STATUS BAR -->
<div class="hl" style="left:0;top:691px;width:1366px;background:#dadada"></div>
<div class="sb" style="left:299px"></div>
<div class="sb" style="left:549px"></div>
<div class="sb" style="left:749px"></div>

<!-- TASKBAR -->
<div class="a" style="left:0;top:728px;width:1366px;height:40px;background:#2f2b1f"></div>
<div class="a" style="left:0;top:728px;width:48px;height:40px;background:#1f2a1b"></div>
<svg class="ico" style="left:15px;top:739px" width="18" height="18" viewBox="0 0 18 18">
 <path d="M1 2.6L7.6 1.7V8.3H1z M8.6 1.55L17 0.4V8.3H8.6z M1 9.3H7.6V15.9L1 15z M8.6 9.3H17V17.2L8.6 16z" fill="#fff"/>
</svg>
<div class="a" style="left:48px;top:728px;width:288px;height:40px;background:#f0f0f0;border-top:1px solid #cfcfcf"></div>
<svg class="ico" style="left:60px;top:739px" width="18" height="18" viewBox="0 0 18 18">
 <circle cx="10.8" cy="6.8" r="5" fill="none" stroke="#1a1a1a" stroke-width="1.3"/>
 <path d="M7.2 10.4L2 15.8" stroke="#1a1a1a" stroke-width="1.4"/>
</svg>
<svg class="ico" style="left:254px;top:728px" width="82" height="40" viewBox="0 0 82 40">
 <defs><linearGradient id="bu" x1="0" y1="0" x2="1" y2="0"><stop offset="0" stop-color="#efe2c2"/><stop offset=".55" stop-color="#ddd0b8"/><stop offset=".6" stop-color="#9a7450"/><stop offset="1" stop-color="#7a5a3a"/></linearGradient>
 <linearGradient id="hd" x1="0" y1="0" x2="1" y2="0"><stop offset="0" stop-color="#e4d4b0"/><stop offset="1" stop-color="#b8a078"/></linearGradient></defs>
 <path d="M6.5 31L17 15.5" stroke="#9a4a7c" stroke-width="3.2" stroke-linecap="round"/>
 <path d="M12.3 6.8L24.9 12.6L21.8 17.5L12 11.7z" fill="#b9a2d8"/>
 <path d="M20.3 30.1L28.9 13" stroke="#6a5aa8" stroke-width="1.6" stroke-linecap="round"/>
 <path d="M28 9.2L33.5 12L28.9 16z" fill="#9c8ed8"/>
 <path d="M29.5 28H72L80.6 37.2H20.6z" fill="#b47a5e"/>
 <path d="M20.6 37.2H80.6V40H20.6z" fill="#94583e"/>
 <path d="M41 25.5Q41 24 45 24H61Q65 24 65 25.5V35Q61 36.5 53 36.5Q45 36.5 41 35z" fill="url(#bu)"/>
 <path d="M44.5 14Q42 5 47 3.5Q55 1.5 59 7Q61 12 59.5 18Q59 22 56 24.5L47.5 24Q46 19 44.5 14z" fill="url(#hd)"/>
 <path d="M42 9Q44 4 50 3Q58 3 60 10Q57 6 51 6.5Q46 7 42 9z" fill="#e8dcc0"/>
 <path d="M42 9.5Q44 12 45 11M58 10Q60 16 59 21" stroke="#a08060" stroke-width="1.2" fill="none"/>
 <path d="M46.5 17.5H48.5M45.5 12.5H48M51 12.5H53" stroke="#6a5438" stroke-width=".8"/>
 <circle cx="41" cy="34.5" r="3" fill="#d8c8a6"/>
 <circle cx="67" cy="32.5" r="4" fill="#c8b490"/>
</svg>
<svg class="ico" style="left:351px;top:740px" width="18" height="16" viewBox="0 0 18 16">
 <path d="M1 3.5H12.5V12.5H1z" fill="none" stroke="#fff" stroke-width="1.2"/>
 <path d="M1 1H12.5M1 15H12.5" stroke="#fff" stroke-width="1.1"/>
 <path d="M15.5 0.5V4M15.5 6V15" stroke="#fff" stroke-width="1.3"/>
</svg>
<svg class="ico" style="left:393px;top:735px" width="26" height="26" viewBox="0 0 26 26">
 <circle cx="13" cy="13" r="12" fill="#dd4536"/>
 <path d="M13 13L2.6 19A12 12 0 0 0 13 25z" fill="#1e9e4e"/>
 <path d="M13 13L13 25A12 12 0 0 0 23.4 7z" fill="#ffcd3c"/>
 <path d="M13 13L23.4 7A12 12 0 0 0 2.6 7z" fill="#dd4536"/>
 <path d="M13 13L2.6 7A12 12 0 0 0 2.6 19z" fill="#1e9e4e"/>
 <circle cx="13" cy="13" r="5.6" fill="#fff"/>
 <circle cx="13" cy="13" r="4.4" fill="#3b7de8"/>
</svg>
<svg class="ico" style="left:502px;top:737px" width="22" height="21" viewBox="0 0 22 21">
 <rect x="0.5" y="0.5" width="21" height="20" rx="3.5" fill="#b30b00"/>
 <path d="M5 15.5Q8 13 11 6Q11.5 3.5 10.5 3.8Q9.6 4.4 10.6 8Q12.5 12.5 17 13.5Q18.5 13.6 17.5 12.8Q14 12 6.5 14.5Q4 16.5 5 15.5z" fill="none" stroke="#fff" stroke-width="1.3"/>
</svg>
<svg class="ico" style="left:542px;top:737px" width="26" height="22" viewBox="0 0 26 22">
 <rect x="7" y="1" width="17" height="17" fill="#28a8ea"/>
 <rect x="7" y="1" width="8.5" height="6" fill="#0364b8"/>
 <rect x="15.5" y="7" width="8.5" height="5.5" fill="#0078d4"/>
 <path d="M7 12H24.5V21.5H7z" fill="#1490df"/>
 <path d="M7 12L15.7 17.5L24.5 12" fill="none" stroke="#0a5aa8" stroke-width="1.2"/>
 <rect x="1" y="5" width="12" height="12" rx="1" fill="#0a5fb0"/>
 <ellipse cx="7" cy="11" rx="3" ry="3.6" fill="none" stroke="#fff" stroke-width="1.7"/>
</svg>
<svg class="ico" style="left:649px;top:740px" width="22" height="16" viewBox="0 0 22 16">
 <rect x="0.5" y="0.5" width="21" height="15" fill="#1e9bf0"/>
 <path d="M9 15.5L21.5 3V15.5z" fill="#33aaf5"/>
 <path d="M1 15.3H3M19 15.3H21" stroke="#d8eefc" stroke-width=".8"/>
</svg>
<svg class="ico" style="left:751px;top:735px" width="26" height="26" viewBox="0 0 26 26">
 <circle cx="7" cy="7" r="5.5" fill="#1a90e0"/>
 <circle cx="12" cy="12" r="10" fill="#1a9af0"/>
 <text x="7" y="18.5" font-family="Liberation Sans" font-weight="bold" font-size="15" fill="#fff">S</text>
 <circle cx="18.5" cy="19" r="6.5" fill="#e23a3a"/>
 <text x="16" y="23" font-family="Liberation Sans" font-weight="bold" font-size="10" fill="#fff">1</text>
</svg>
<svg class="ico" style="left:854px;top:735px" width="30" height="30" viewBox="0 0 30 30">
 <path d="M5.2 19.5L3 24.5L8.3 22.8A10.6 10.6 0 1 0 5.2 19.5z" fill="none" stroke="#27c94a" stroke-width="2.4" stroke-linejoin="round"/>
 <path d="M9.5 8.5Q10.5 7.2 11.5 7.8L13 10.8Q12.6 11.8 12 12.4Q13.3 15 16 16.4L17.3 15.2L20 16.8Q19.8 18.8 17.6 19Q10.5 17.8 9.5 8.5z" fill="#27c94a"/>
 <circle cx="19.5" cy="20" r="8" fill="#2b2b2b" stroke="#8a8a8a" stroke-width="1.2"/>
 <text x="16.2" y="24.5" font-family="Liberation Sans" font-weight="bold" font-size="12" fill="#fff">7</text>
</svg>
<svg class="ico" style="left:961px;top:735px" width="22" height="26" viewBox="0 0 22 26">
 <defs><linearGradient id="sp" x1="0" y1="0" x2="0" y2="1"><stop offset="0" stop-color="#ffd24a"/><stop offset="1" stop-color="#f07a10"/></linearGradient></defs>
 <path d="M13 1Q3 5 2 14Q2 24 11 25Q20 24.5 20.5 15Q20.5 9 15 7Q10 9 11 4Q11.5 2.5 13 1z" fill="url(#sp)"/>
 <path d="M11 13Q6 15 7.5 20Q10 23 13.5 20Q15.5 17 12.5 15Q11 14.5 11 13z" fill="#e0501a"/>
</svg>
<div class="a" style="left:1057px;top:728px;width:103px;height:40px;background:#5a574a"></div>
<svg class="ico" style="left:1064px;top:737px" width="23" height="23" viewBox="0 0 23 23">
 <circle cx="11.5" cy="11.5" r="11" fill="#f0101a"/>
 <text x="2.6" y="15.3" font-family="Liberation Sans" font-weight="bold" font-size="10" fill="#fff" textLength="17.5" lengthAdjust="spacingAndGlyphs">CNE</text>
</svg>
<svg class="ico" style="left:1168px;top:743px" width="14" height="9" viewBox="0 0 14 9"><path d="M1 8L7 1.5L13 8" fill="none" stroke="#fff" stroke-width="1.3"/></svg>
<svg class="ico" style="left:1190px;top:741px" width="19" height="15" viewBox="0 0 19 15">
 <path d="M5.5 1.5H17.5V10H5.5z" fill="none" stroke="#fff" stroke-width="1.2"/>
 <path d="M10 10V13M7 13.5H14" stroke="#fff" stroke-width="1.2"/>
 <rect x="0.8" y="0.8" width="4.5" height="4.5" fill="#2b281f" stroke="#fff" stroke-width="1.1"/>
 <path d="M3 5.5V13H7" fill="none" stroke="#fff" stroke-width="1.1"/>
</svg>
<svg class="ico" style="left:1214px;top:740px" width="25" height="15" viewBox="0 0 25 15">
 <rect x="1" y="1" width="23" height="13" fill="none" stroke="#fff" stroke-width="1.3"/>
 <path d="M4 4.3H21M4 7.3H21M7 10.3H18" stroke="#fff" stroke-width="1" stroke-dasharray="1.3 .8"/>
</svg>
<svg class="ico" style="left:1324px;top:739px" width="28" height="28" viewBox="0 0 28 28">
 <path d="M1.5 1.5H17.5V12.5H8L4.5 15.5V12.5H1.5z" fill="#fff"/>
 <path d="M4.5 4.5H14.5M4.5 7H14.5M4.5 9.5H12" stroke="#2b281f" stroke-width="1"/>
 <circle cx="16.5" cy="16" r="9.2" fill="#2b2b2b" stroke="#8a8a8a" stroke-width="1.2"/>
 <text x="10.5" y="20.5" font-family="Liberation Sans" font-weight="bold" font-size="11.5" fill="#fff">17</text>
</svg>
<div class="a" style="left:1361px;top:728px;width:1px;height:40px;background:#6d6a60"></div>
<div class="ul" style="left:391px;width:96px"></div>
<div class="ul" style="left:540px;width:96px"></div>
<div class="ul" style="left:645px;width:95px"></div>
<div class="ul" style="left:749px;width:95px"></div>
<div class="ul" style="left:853px;width:95px"></div>
<div class="ul" style="left:957px;width:95px"></div>
<div class="ul" style="left:1057px;width:103px"></div>


<div class="lb" style="left:90.00px;top:73.89px;font-size:11px;line-height:11px;color:#000;transform:scaleX(0.9678);">Opcoes</div>
<div class="lb" style="left:145.06px;top:73.89px;font-size:11px;line-height:11px;color:#000;transform:scaleX(1.0399);">Filtro</div>
<div class="lb" style="left:186.11px;top:73.89px;font-size:11px;line-height:11px;color:#000;transform:scaleX(0.9829);">F1 - Incluir</div>
<div class="lb" style="left:248.39px;top:73.89px;font-size:11px;line-height:11px;color:#000;transform:scaleX(1.0106);">F2 - Alterar</div>
<div class="lb" style="left:314.64px;top:73.89px;font-size:11px;line-height:11px;color:#000;transform:scaleX(0.9554);">F3 - Excluir</div>
<div class="lb" style="left:385.52px;top:73.89px;font-size:11px;line-height:11px;color:#a0a0a0;transform:scaleX(0.9703);">F4 - Cancelar</div>
<div class="lb" style="left:460.52px;top:73.89px;font-size:11px;line-height:11px;color:#a0a0a0;transform:scaleX(0.9771);">F5 - Salvar</div>
<div class="lb" style="left:523.31px;top:73.89px;font-size:11px;line-height:11px;color:#000;transform:scaleX(0.9864);">Fechar</div>
<div class="lb" style="left:571.20px;top:73.89px;font-size:11px;line-height:11px;color:#000;transform:scaleX(1.0821);">Inf.Regist.</div>
<div class="lb" style="left:643.88px;top:73.89px;font-size:11px;line-height:11px;color:#000;transform:scaleX(0.9702);">Auditoria</div>
<div class="lb" style="left:717.58px;top:73.89px;font-size:11px;line-height:11px;color:#000;transform:scaleX(0.9656);">Agenda</div>
<div class="lb" style="left:790.02px;top:73.89px;font-size:11px;line-height:11px;color:#000;transform:scaleX(0.9548);"><u>S</u>erasa</div>
<div class="lb" style="left:856.55px;top:73.89px;font-size:11px;line-height:11px;color:#000;transform:scaleX(0.9415);">BoaVista</div>
<div class="lb" style="left:929.00px;top:73.89px;font-size:11px;line-height:11px;color:#000;transform:scaleX(0.9866);">I<u>m</u>primir</div>
<div class="lb" style="left:1006.53px;top:73.89px;font-size:11px;line-height:11px;color:#000;transform:scaleX(0.9617);">Ficha</div>
<div class="lb" style="left:1064.90px;top:73.89px;font-size:11px;line-height:11px;color:#000;transform:scaleX(0.9685);">Ocorrencia</div>
<div class="lb" style="left:23.01px;top:6.12px;font-size:12.5px;line-height:12.5px;color:#000;transform:scaleX(0.9360);">Cadastro de Cliente</div>
<div class="lb" style="left:6.94px;top:96.44px;font-size:12px;line-height:12px;color:#000;transform:scaleX(0.8717);">Modo Tabela</div>
<div class="lb" style="left:79.65px;top:98.44px;font-size:12px;line-height:12px;color:#000;transform:scaleX(0.8669);">Modo Ficha</div>
<div class="lb" style="left:19.42px;top:123.09px;font-size:11px;line-height:11px;color:#000;transform:scaleX(0.9753);background:#f0f0f0;padding:0 1px;margin-left:-1px">Buscar em ordem de:</div>
<div class="lb" style="left:23.09px;top:154.29px;font-size:11px;line-height:11px;color:#000;transform:scaleX(1.0036);">Estado</div>
<div class="lb" style="left:276.58px;top:124.89px;font-size:11px;line-height:11px;color:#000;transform:scaleX(1.0152);background:#f0f0f0">Modo:</div>
<div class="lb" style="left:292.80px;top:141.29px;font-size:11px;line-height:11px;color:#000;transform:scaleX(0.9893);">Iniciando</div>
<div class="lb" style="left:363.77px;top:141.29px;font-size:11px;line-height:11px;color:#000;transform:scaleX(0.9456);">Todos</div>
<div class="lb" style="left:292.94px;top:156.19px;font-size:11px;line-height:11px;color:#000;transform:scaleX(1.0406);">Igual</div>
<div class="lb" style="left:362.93px;top:156.19px;font-size:11px;line-height:11px;color:#000;transform:scaleX(1.0562);">Intervalo</div>
<div class="lb" style="left:293.45px;top:171.19px;font-size:11px;line-height:11px;color:#000;transform:scaleX(0.9853);">Contendo</div>
<div class="lb" style="left:432.59px;top:123.89px;font-size:11px;line-height:11px;color:#000;transform:scaleX(1.0072);background:#f0f0f0">Expressão:</div>
<div class="lb" style="left:435.62px;top:149.15px;font-size:16px;line-height:16px;color:#000;transform:scaleX(1.1061);-webkit-text-stroke:0.3px #000">m</div>
<div class="lb" style="left:450.26px;top:149.15px;font-size:16px;line-height:16px;color:#000;transform:scaleX(1.0979);-webkit-text-stroke:0.3px #000">g</div>
<div class="lb" style="left:11.77px;top:210.25px;font-size:16px;line-height:16px;color:#dedede;transform:scaleX(0.9393);">Drag a column header here to group by that column</div>
<div class="lb" style="left:22.24px;top:240.38px;font-size:15.5px;line-height:15.5px;color:#3a3a3a;transform:scaleX(0.9162);">Razão Social/Nome</div>
<div class="lb" style="left:647.11px;top:240.38px;font-size:15.5px;line-height:15.5px;color:#3a3a3a;transform:scaleX(0.9377);">Data Cadastr</div>
<div class="lb" style="left:755.50px;top:240.38px;font-size:15.5px;line-height:15.5px;color:#3a3a3a;transform:scaleX(0.8851);">Código</div>
<div class="lb" style="left:815.04px;top:240.38px;font-size:15.5px;line-height:15.5px;color:#3a3a3a;transform:scaleX(0.9532);">Insc. Estadual/RG</div>
<div class="lb" style="left:996.73px;top:240.38px;font-size:15.5px;line-height:15.5px;color:#3a3a3a;transform:scaleX(0.8551);">CNPJ/CPF</div>
<div class="lb" style="left:1169.11px;top:240.38px;font-size:15.5px;line-height:15.5px;color:#3a3a3a;transform:scaleX(0.9371);">Fantasia/Sobrenome</div>
<div class="lb" style="left:753.48px;top:706.06px;font-size:11.5px;line-height:11.5px;color:#000;font-weight:bold;transform:scaleX(0.9494);">Total de 2510 registro(s) encontrado(s) em 01 seg</div>
<div class="lb" style="left:87.26px;top:742.02px;font-size:14.5px;line-height:14.5px;color:#333;transform:scaleX(0.9612);">Pesquisar</div>
<div class="lb" style="left:421.33px;top:741.37px;font-size:13.5px;line-height:13.5px;color:#fff;transform:scaleX(0.8771);">Portal da ...</div>
<div class="lb" style="left:570.43px;top:741.37px;font-size:13.5px;line-height:13.5px;color:#fff;transform:scaleX(0.8581);">Itens Envi...</div>
<div class="lb" style="left:676.08px;top:741.37px;font-size:13.5px;line-height:13.5px;color:#fff;transform:scaleX(0.8242);">Área de Tr...</div>
<div class="lb" style="left:779.17px;top:741.37px;font-size:13.5px;line-height:13.5px;color:#fff;transform:scaleX(0.8719);">Skype [1]</div>
<div class="lb" style="left:884.05px;top:741.37px;font-size:13.5px;line-height:13.5px;color:#fff;transform:scaleX(0.8840);">WhatsApp</div>
<div class="lb" style="left:987.29px;top:741.37px;font-size:13.5px;line-height:13.5px;color:#fff;transform:scaleX(0.8393);">Spark</div>
<div class="lb" style="left:1091.18px;top:741.37px;font-size:13.5px;line-height:13.5px;color:#fff;transform:scaleX(0.8333);">ERP - CN...</div>
<div class="lb" style="left:1263.99px;top:733.12px;font-size:12.5px;line-height:12.5px;color:#fff;transform:scaleX(0.8480);">13:31</div>
<div class="lb" style="left:1248.54px;top:751.22px;font-size:12.5px;line-height:12.5px;color:#fff;transform:scaleX(0.9359);">06/03/2025</div>
</body></html>
